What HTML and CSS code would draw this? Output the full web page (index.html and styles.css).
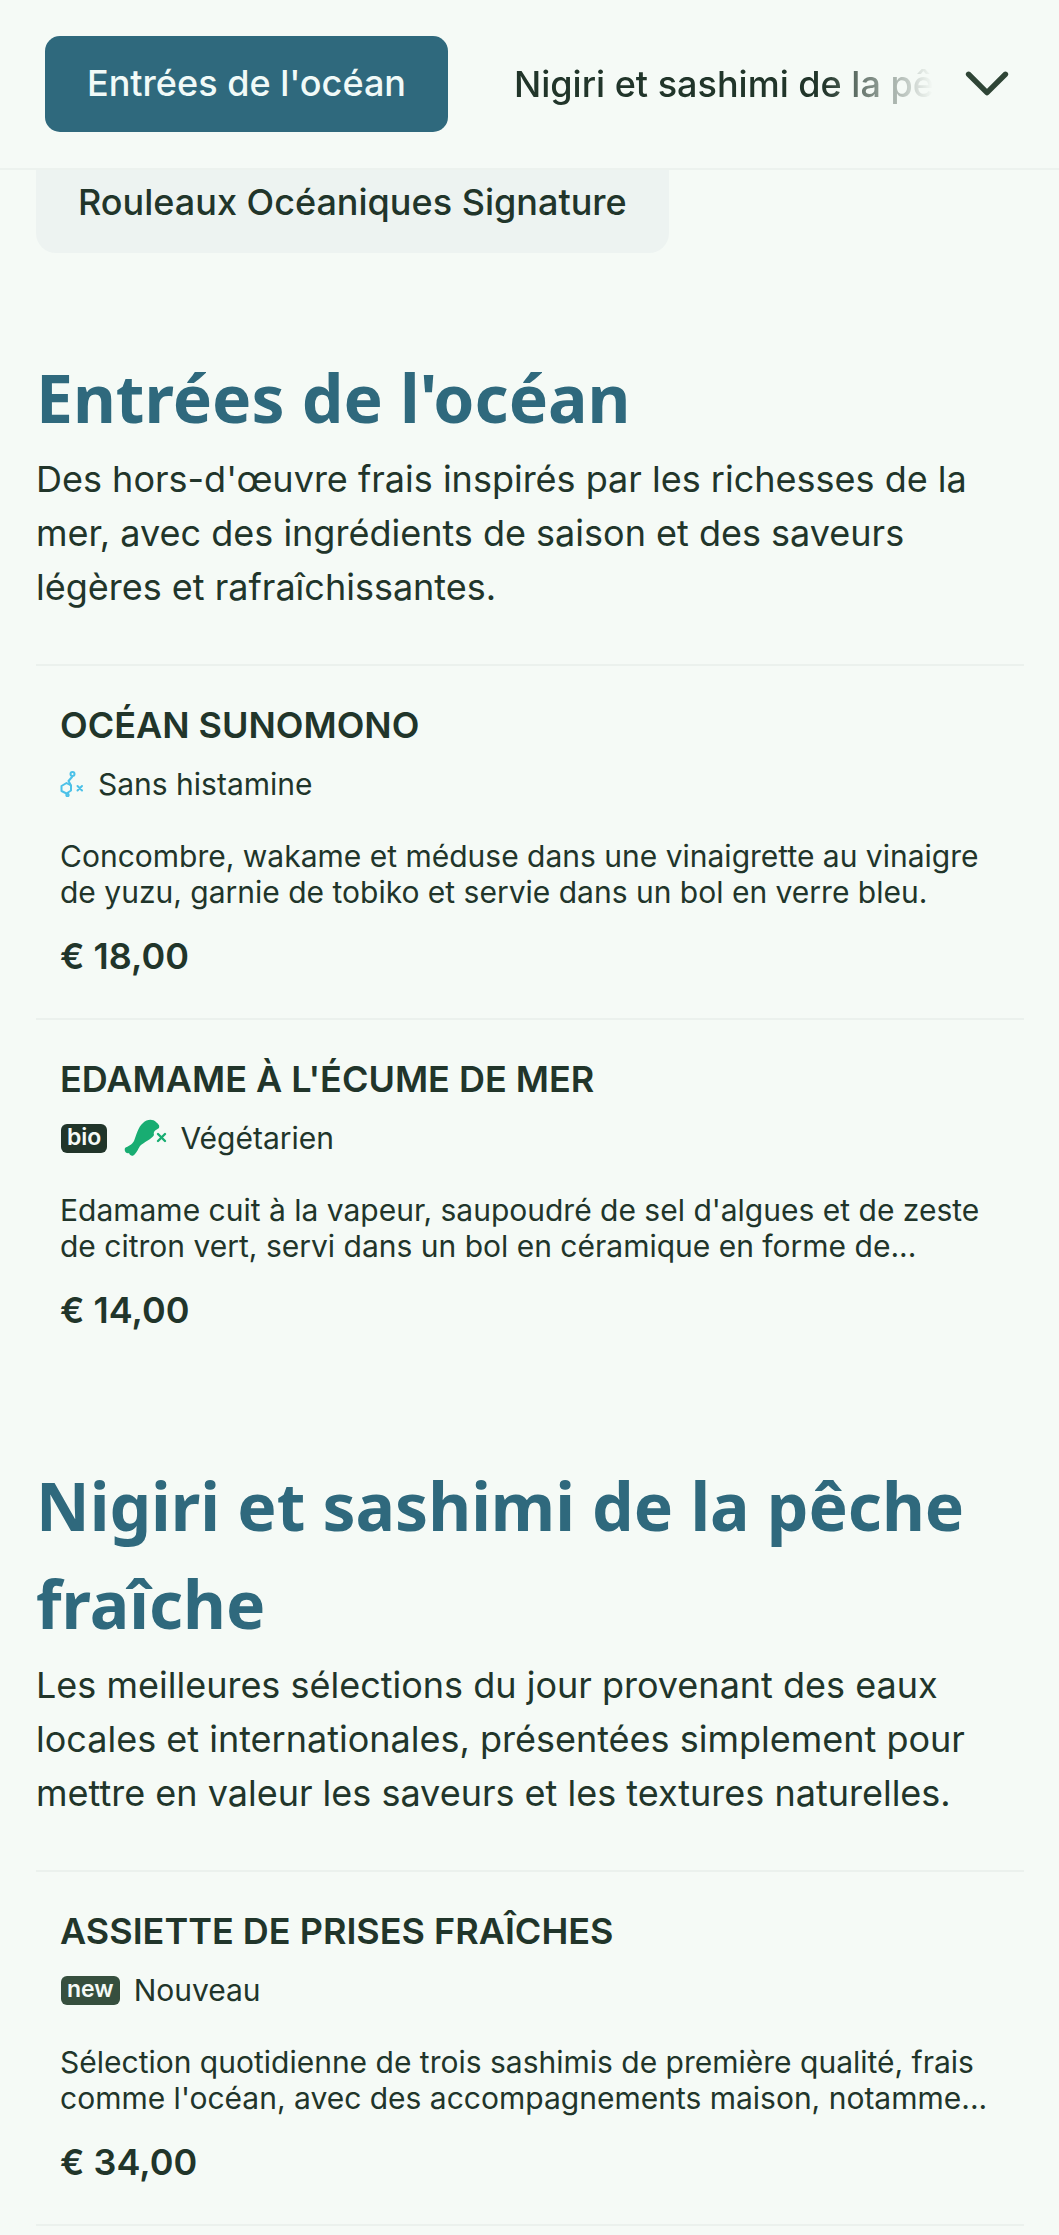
FILE: index.html
```html
<!DOCTYPE html>
<html lang="fr">
<head>
    <meta charset="UTF-8">
    <meta name="viewport" content="width=device-width, initial-scale=1.0">
    <title>Menu</title>
    <link rel="stylesheet" href="styles.css">
</head>
<body>
    <header class="topbar">
        <a class="tab tab-active">Entrées de l'océan</a>
        <div class="tab-scroll">
            <a class="tab">Nigiri et sashimi de la pêche fraîche</a>
        </div>
        <svg class="chevron" viewBox="0 0 40 24" fill="none" stroke="currentColor" stroke-width="5" stroke-linecap="round" stroke-linejoin="round">
            <path d="M3 3 L20 20 L37 3"/>
        </svg>
    </header>

    <main class="content">
        <div class="chip-row">
            <a class="chip">Rouleaux Océaniques Signature</a>
        </div>

        <section class="category">
            <h2>Entrées de l'océan</h2>
            <p class="category-desc">Des hors-d'œuvre frais inspirés par les richesses de la mer, avec des ingrédients de saison et des saveurs légères et rafraîchissantes.</p>

            <article class="item">
                <h3>OCÉAN SUNOMONO</h3>
                <div class="tags">
                    <svg class="icon-histamine" viewBox="0 0 24 26" fill="none" stroke="#4cc1e8" stroke-width="2" stroke-linejoin="round" stroke-linecap="round">
                        <path d="M1.5 15 L6.5 12 L11 14.5 L11 19.5 L6.5 22.5 L1.5 20 Z"/>
                        <path d="M11 14.5 L8.5 10 L12 6"/>
                        <circle cx="12.5" cy="3" r="2"/>
                        <circle cx="7.5" cy="24" r="1.2"/>
                        <path d="M17.5 15 L22 19.5 M22 15 L17.5 19.5"/>
                    </svg>
                    <span>Sans histamine</span>
                </div>
                <p class="item-desc">Concombre, wakame et méduse dans une vinaigrette au vinaigre de yuzu, garnie de tobiko et servie dans un bol en verre bleu.</p>
                <div class="price">€ 18,00</div>
            </article>

            <article class="item">
                <h3>EDAMAME À L'ÉCUME DE MER</h3>
                <div class="tags">
                    <span class="badge badge-bio">bio</span>
                    <svg class="icon-veg" viewBox="0 0 44 38" fill="none">
                        <path d="M1 29 C4 27 8 26 10 22 C12 17 14 8 19 4 C23 0 29 0 32 3 C34 5 36 6 35 9 C32 11 29 12 30 16 C28 20 20 23 16 27 C14 30 13 33 11 35 C9 38 6 37 5 34 C2 35 0 32 1 29 Z" fill="#18ad72"/>
                        <path d="M34 15 L41 22 M41 15 L34 22" stroke="#18ad72" stroke-width="2.4" stroke-linecap="round"/>
                    </svg>
                    <span>Végétarien</span>
                </div>
                <p class="item-desc">Edamame cuit à la vapeur, saupoudré de sel d'algues et de zeste de citron vert, servi dans un bol en céramique en forme de...</p>
                <div class="price">€ 14,00</div>
            </article>
        </section>

        <section class="category">
            <h2>Nigiri et sashimi de la pêche fraîche</h2>
            <p class="category-desc">Les meilleures sélections du jour provenant des eaux locales et internationales, présentées simplement pour mettre en valeur les saveurs et les textures naturelles.</p>

            <article class="item">
                <h3>ASSIETTE DE PRISES FRAÎCHES</h3>
                <div class="tags">
                    <span class="badge badge-new">new</span>
                    <span>Nouveau</span>
                </div>
                <p class="item-desc">Sélection quotidienne de trois sashimis de première qualité, frais comme l'océan, avec des accompagnements maison, notamme...</p>
                <div class="price">€ 34,00</div>
            </article>
            <div class="item-end"></div>
        </section>
    </main>
</body>
</html>
```

FILE: styles.css
```css
* {
    box-sizing: border-box;
}

body {
    margin: 0;
    background-color: #f5faf6;
    color: #21352a;
    font-family: Inter, "Liberation Sans", sans-serif;
}

.topbar {
    display: flex;
    align-items: center;
    height: 170px;
    padding: 0 50px 1px 45px;
    border-bottom: 2px solid #ecf2ee;
}

.tab {
    display: block;
    flex-shrink: 0;
    font-size: 36px;
    font-weight: 500;
    line-height: 94px;
    white-space: nowrap;
}

.tab-active {
    width: 403px;
    height: 96px;
    padding-left: 42px;
    background-color: #2f697d;
    color: #f1faf8;
    border-radius: 15px;
}

.tab-scroll {
    flex: 1;
    margin-left: 66px;
    min-width: 0;
    overflow: hidden;
    -webkit-mask-image: linear-gradient(to right, #000 74%, transparent 100%);
    mask-image: linear-gradient(to right, #000 74%, transparent 100%);
}

.chevron {
    flex-shrink: 0;
    width: 44px;
    height: 26px;
    margin-left: 32px;
    color: #2f4536;
}

.content {
    padding: 0 35px 0 36px;
    overflow: hidden;
}

.chip-row {
    display: flex;
    margin-top: -20px;
}

.chip {
    display: block;
    padding: 0 42px;
    height: 103px;
    line-height: 104px;
    font-size: 36px;
    font-weight: 500;
    background-color: #edf3f1;
    border-radius: 20px;
    white-space: nowrap;
}

.category {
    margin-top: 95px;
}

.category + .category {
    margin-top: 84px;
}

h2 {
    margin: 0;
    font-family: "Noto Sans", sans-serif;
    font-size: 66px;
    font-weight: 700;
    line-height: 98px;
    color: #2f697d;
}

.category-desc {
    margin: 6px 0 0;
    font-size: 36px;
    line-height: 54px;
}

.item {
    padding: 36px 24px 0;
    height: 354px;
    border-top: 2px solid #ebf1ed;
}

.category-desc + .item {
    margin-top: 50px;
}

h3 {
    margin: 0;
    font-size: 36px;
    font-weight: 600;
    line-height: 46px;
}

.tags {
    display: flex;
    align-items: center;
    gap: 14px;
    height: 44px;
    margin-top: 14px;
    font-size: 30px;
}

.icon-histamine {
    width: 24px;
    height: 26px;
}

.icon-veg {
    width: 44px;
    height: 38px;
    margin: 0 -2px 0 3px;
}

.badge {
    display: block;
    height: 29px;
    margin-left: 1px;
    padding: 0 6px;
    border-radius: 6px;
    color: #f5faf6;
    font-size: 23px;
    font-weight: 600;
    line-height: 27px;
}

.badge-bio {
    background-color: #21352a;
}

.badge-new {
    background-color: #364f3e;
}

.item-desc {
    margin: 32px 0 0;
    font-size: 30px;
    line-height: 36px;
}

.price {
    margin-top: 23px;
    font-size: 36px;
    font-weight: 600;
    line-height: 46px;
}

.item-end {
    border-top: 2px solid #ebf1ed;
}
```
